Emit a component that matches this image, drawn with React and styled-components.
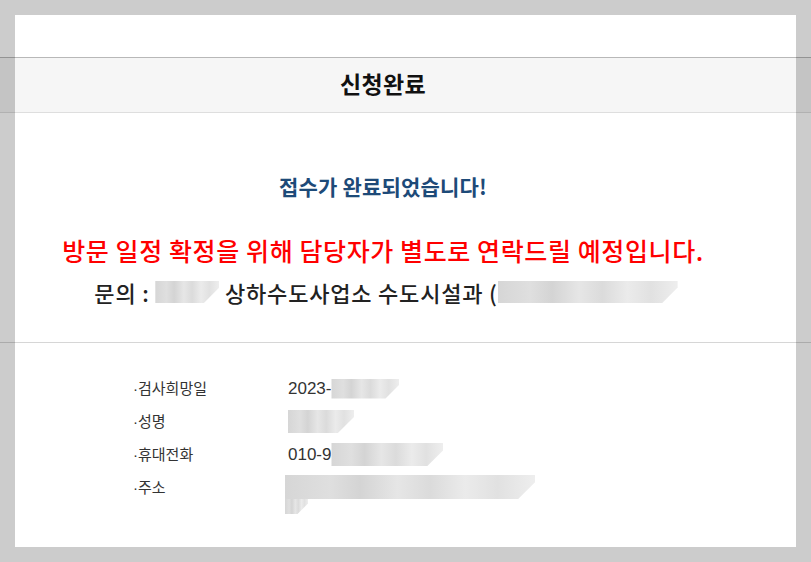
import React from "react";
import styled, { createGlobalStyle } from "styled-components";

const Global = createGlobalStyle`
  html, body { margin: 0; padding: 0; background: #ffffff; }
  body { font-family: "Noto Sans CJK KR", "Noto Sans", sans-serif; }
`;

const Frame = styled.div`
  position: relative;
  width: 811px;
  height: 562px;
  overflow: hidden;
  background: #fff;
  display: flex;
  flex-direction: column;
  &::after {
    content: "";
    position: absolute;
    inset: 0;
    border: 15px solid rgba(0, 0, 0, 0.2);
    pointer-events: none;
  }
`;

const TopSpace = styled.div`
  height: 57px;
  flex: none;
`;

const HeaderBand = styled.header`
  flex: none;
  height: 54px;
  border-top: 1px solid #b8b8b8;
  border-bottom: 1px solid #dedede;
  background: #f6f6f6;
  display: flex;
`;

const Inner = styled.div`
  width: 766px;
  display: flex;
  flex-direction: column;
  align-items: center;
`;

const Title = styled.h1`
  margin: 0;
  width: 100%;
  text-align: center;
  font-size: 23px;
  font-weight: 700;
  line-height: 50px;
  color: #111;
  letter-spacing: 0.4px;
`;

const MessageBand = styled.section`
  flex: none;
  height: 229px;
  border-bottom: 1px solid #d6d6d6;
  display: flex;
`;

const MessageInner = styled(Inner)`
  padding-top: 58px;
`;

const Done = styled.p`
  margin: 0;
  font-size: 21px;
  font-weight: 700;
  line-height: 30px;
  color: #1d4a78;
  letter-spacing: 0.2px;
`;

const Notice = styled.p`
  margin: 32px 0 0;
  font-size: 25px;
  font-weight: 500;
  line-height: 34px;
  color: #ff0000;
  letter-spacing: 0.6px;
`;

const Contact = styled.p`
  margin: 10px 0 0;
  font-size: 22px;
  font-weight: 500;
  line-height: 30px;
  color: #222;
  letter-spacing: 0.8px;
  display: flex;
  align-items: center;
  white-space: pre;
  transform: translateX(3px);
`;

const Mosaic = styled.span`
  display: inline-block;
  width: ${(p) => p.$w}px;
  height: ${(p) => p.$h}px;
  vertical-align: middle;
  background:
    linear-gradient(
      to right,
      #d6d6d6 0%,
      #dfdfdf 18%,
      #d4d4d4 30%,
      #e6e6e6 45%,
      #dbdbdb 58%,
      #ebebeb 72%,
      #e1e1e1 85%,
      #eeeeee 100%
    );
  clip-path: polygon(
    0 0,
    100% 0,
    100% 30%,
    calc(100% - ${(p) => p.$h * 0.7}px) 100%,
    0 100%
  );
`;

const InfoBand = styled.section`
  flex: 1;
  padding: 29px 0 0 133px;
`;

const InfoGrid = styled.dl`
  margin: 0;
  display: grid;
  grid-template-columns: 155px auto;
  grid-auto-rows: minmax(33px, auto);
  align-items: start;
  font-family: "Liberation Sans", "Noto Sans CJK KR", sans-serif;
  font-size: 15px;
  color: #333;
`;

const Label = styled.dt`
  margin: 0;
  line-height: 33px;
  &::before {
    content: "·";
  }
`;

const Value = styled.dd`
  margin: 0;
  line-height: 33px;
  min-height: 33px;
  font-size: 17px;
  display: flex;
  align-items: center;
`;

const AddressValue = styled.dd`
  margin: 4px 0 0 -3px;
  display: flex;
  flex-direction: column;
`;

export default function App() {
  return (
    <>
      <Global />
      <Frame>
        <TopSpace />
        <HeaderBand>
          <Inner>
            <Title>신청완료</Title>
          </Inner>
        </HeaderBand>
        <MessageBand>
          <MessageInner>
            <Done>접수가 완료되었습니다!</Done>
            <Notice>방문 일정 확정을 위해 담당자가 별도로 연락드릴 예정입니다.</Notice>
            <Contact>
              문의 : <Mosaic $w={64} $h={22} /> 상하수도사업소 수도시설과 (<Mosaic $w={180} $h={22} />
            </Contact>
          </MessageInner>
        </MessageBand>
        <InfoBand>
          <InfoGrid>
            <Label>검사희망일</Label>
            <Value>
              2023-<Mosaic $w={68} $h={20} />
            </Value>
            <Label>성명</Label>
            <Value>
              <Mosaic $w={66} $h={23} />
            </Value>
            <Label>휴대전화</Label>
            <Value>
              010-9<Mosaic $w={112} $h={23} />
            </Value>
            <Label>주소</Label>
            <AddressValue>
              <Mosaic $w={250} $h={24} />
              <Mosaic $w={23} $h={15} />
            </AddressValue>
          </InfoGrid>
        </InfoBand>
      </Frame>
    </>
  );
}
